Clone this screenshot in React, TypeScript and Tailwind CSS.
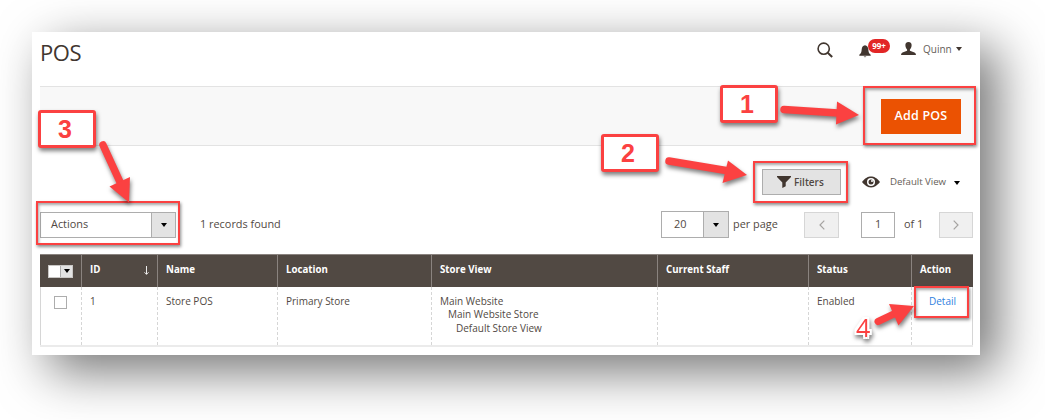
import type { ReactNode } from "react";

function Caret({ className = "" }: { className?: string }) {
  return (
    <svg viewBox="0 0 6 4" className={`h-1 w-1.5 shrink-0 ${className}`} fill="currentColor">
      <path d="M0 0h6L3 4z" />
    </svg>
  );
}

function SearchIcon() {
  return (
    <svg viewBox="0 0 16 16" className="size-4" fill="none" stroke="#41362f" strokeWidth="1.6">
      <circle cx="6.7" cy="6.7" r="5.6" />
      <path d="M10.7 10.7l4.5 4.3" strokeWidth="2" />
    </svg>
  );
}

function BellIcon() {
  return (
    <svg viewBox="0 0 12 13" className="h-[13px] w-3" fill="#41362f">
      <path d="M6 0.3C3.9.7 2.9 2.2 2.7 4.2 2.5 7 2 8.6.3 9.7V10.7H11.7V9.7C10 8.6 9.5 7 9.3 4.2 9.1 2.2 8.1.7 6 .3zM4.6 11.4a1.5 1.3 0 0 0 2.8 0z" />
    </svg>
  );
}

function UserIcon() {
  return (
    <svg viewBox="0 0 15 13" className="h-[13px] w-[15px]" fill="#41362f">
      <path d="M7.5 0C5.3 0 4.2 1.500 4.4 3.500 4.5 5.200 5.2 6.600 6.1 7.400V8.800L1.500 10.400Q0 11 0 13H15Q15 11 13.500 10.400L8.900 8.800V7.400C9.800 6.600 10.500 5.200 10.600 3.500 10.800 1.500 9.700 0 7.500 0z" />
    </svg>
  );
}

function FunnelIcon() {
  return (
    <svg viewBox="0 0 14 12" className="h-3 w-3.5" fill="#41362f">
      <path d="M0 0H14V1L8.700 6.500V10.300L5.300 12V6.500L0 1z" />
    </svg>
  );
}

function EyeIcon() {
  return (
    <svg viewBox="0 0 18 12" className="h-3 w-[18px]">
      <path d="M0 6C3.500 1.800 6 .6 9 .6S14.500 1.800 18 6C14.500 10.200 12 11.400 9 11.400S3.500 10.200 0 6z" fill="#41362f" />
      <circle cx="9" cy="5.900" r="4" fill="#fff" />
      <circle cx="9" cy="5.900" r="2.500" fill="#41362f" />
      <circle cx="10" cy="5" r="1" fill="#fff" />
    </svg>
  );
}

function Chevron({ flip = false }: { flip?: boolean }) {
  return (
    <svg viewBox="0 0 6 10" className={flip ? "h-2.5 w-1.5 -scale-x-100" : "h-2.5 w-1.5"} fill="none" stroke="#a5a3a1" strokeWidth="1.2">
      <path d="M5.300.6L1 5l4.300 4.400" />
    </svg>
  );
}

function Header() {
  return (
    <header className="flex h-[54px] items-start pl-2">
      <h1 className="mt-1 text-[22px] leading-8 tracking-[-0.4px] text-[#41362f]">POS</h1>
      <div className="ml-auto flex h-[34px] items-center pr-[18px]">
        <span className="mt-0.5">
          <SearchIcon />
        </span>
        <div className="ml-[26px] flex items-center">
          <span className="mt-1">
            <BellIcon />
          </span>
          <span className="-mt-1.5 -ml-[3px] flex h-3.5 w-[22px] items-center justify-center rounded-full bg-[#e22626] text-[8px] font-bold text-white">99+</span>
        </div>
        <span className="ml-[11px] -mt-px">
          <UserIcon />
        </span>
        <span className="ml-[7px] w-[27px] text-[10px] whitespace-nowrap text-[#665e58]">Quinn</span>
        <Caret className="ml-[6px] text-[#41362f]" />
      </div>
    </header>
  );
}

function ListToolbar() {
  return (
    <div className="pr-[7px] pl-2 text-[#514943]">
      <div className="mt-[23px] flex h-[26px] items-center justify-end">
        <button className="flex h-[26px] w-[79px] items-center border border-[#adadad] bg-[#e3e3e3] pl-3.5 text-[10px] font-semibold">
          <FunnelIcon />
          <span className="mt-px ml-[3px]">Filters</span>
        </button>
        <span className="ml-[21px]">
          <EyeIcon />
        </span>
        <span className="mt-px ml-2.5 w-14 text-[9.7px] tracking-[-0.05px] whitespace-nowrap text-[#665e58]">Default View</span>
        <Caret className="mt-0.5 mr-[13px] ml-2 text-black" />
      </div>
      <div className="mt-4 flex h-[27px] items-center text-[10.9px]">
        <div className="flex h-[26px] w-[136px] border border-[#adadad]">
          <span className="flex flex-1 items-center pl-2.5">Actions</span>
          <span className="flex w-6 items-center justify-center border-l border-[#adadad] bg-[#e3e3e3] text-black">
            <Caret />
          </span>
        </div>
        <span className="ml-6">1 records found</span>
        <div className="ml-auto flex h-[27px] w-[68px] border border-[#adadad]">
          <span className="flex flex-1 items-center pl-3">20</span>
          <span className="flex w-[25px] items-center justify-center border-l border-[#adadad] bg-[#e3e3e3] text-black">
            <Caret />
          </span>
        </div>
        <span className="ml-1 w-[71px] whitespace-nowrap">per page</span>
        <span className="flex h-[26px] w-[35px] items-center justify-center border border-[#d6d6d6] bg-[#f0f0f0]">
          <Chevron />
        </span>
        <span className="ml-[22px] flex h-[26px] w-[34px] items-center justify-center border border-[#adadad]">1</span>
        <span className="ml-[9px] w-[35px] whitespace-nowrap">of 1</span>
        <span className="flex h-[26px] w-[34px] items-center justify-center border border-[#d6d6d6] bg-[#f0f0f0]">
          <Chevron flip />
        </span>
      </div>
    </div>
  );
}

const columns = "grid grid-cols-[41px_76px_120px_154px_226px_151px_103px_62px]";

function HeadCell({ children }: { children?: ReactNode }) {
  return <div className="flex items-center border-l border-[#8a837f] pb-0.5 pl-2">{children}</div>;
}

function Cell({ children }: { children?: ReactNode }) {
  return <div className="border-l border-dashed border-[#d6d6d6] pt-2 pl-2">{children}</div>;
}

function Records() {
  return (
    <div className="mr-[7px] ml-2 mt-4 text-[10px]">
      <div className={`${columns} h-[33px] border-t border-[#8a837f] bg-[#514943] text-[9.7px] font-bold whitespace-nowrap text-white`}>
        <div className="flex items-center pl-2">
          <div className="flex h-[13px] w-[25px] border border-[#c9c7c5] bg-white">
            <span className="ml-auto flex w-3 items-center justify-center border-l border-[#adadad] bg-[#e3e3e3] text-black">
              <Caret />
            </span>
          </div>
        </div>
        <HeadCell>
          ID
          <svg viewBox="0 0 5 9" className="mr-2 ml-auto h-[9px] w-[5px]" fill="none" stroke="#fff" strokeWidth="0.9">
            <path d="M2.500 0v8.300M.5 6.300l2 2 2-2" />
          </svg>
        </HeadCell>
        <HeadCell>Name</HeadCell>
        <HeadCell>Location</HeadCell>
        <HeadCell>Store View</HeadCell>
        <HeadCell>Current Staff</HeadCell>
        <HeadCell>Status</HeadCell>
        <HeadCell>Action</HeadCell>
      </div>
      <div className={`${columns} h-[60px] border-b-2 border-[#ebebeb] leading-[13.300px] text-[#514943]`}>
        <div className="border-l border-[#d6d6d6] pt-[9px] pl-[13px]">
          <div className="size-[13px] border border-[#adadad]" />
        </div>
        <Cell>1</Cell>
        <Cell>Store POS</Cell>
        <Cell>Primary Store</Cell>
        <Cell>
          <div>Main Website</div>
          <div className="pl-2">Main Website Store</div>
          <div className="pl-4">Default Store View</div>
        </Cell>
        <Cell />
        <Cell>Enabled</Cell>
        <div className="border-r border-l border-dashed border-[#d6d6d6] [border-right-style:solid] pt-2 pl-[17px]">
          <a className="text-[#2f7fe0]">Detail</a>
        </div>
      </div>
    </div>
  );
}

const frame = "absolute border-2 border-[#fb4141] shadow-[1px_2px_3px_rgba(0,0,0,0.45),inset_1px_2px_3px_rgba(0,0,0,0.35)]";
const label =
  "absolute flex h-[38px] w-[58px] items-center justify-center rounded-[3px] border-[3px] border-[#fb4141] bg-white pr-1 font-['Liberation_Sans',sans-serif] text-[25px] leading-none font-bold text-[#fb4141] shadow-[1px_3px_4px_rgba(0,0,0,0.5)]";

function Annotations() {
  return (
    <>
      <div className={`${frame} top-[86px] left-[863px] h-[59px] w-[113px]`} />
      <div className={`${frame} top-[161px] left-[753px] h-[42px] w-[95px]`} />
      <div className={`${frame} top-[201px] left-[36px] h-[44px] w-[144px]`} />
      <div className={`${frame} top-[286px] left-[914px] h-[32px] w-[55px]`} />
      <div className={`${label} top-[85px] left-[720px]`}>1</div>
      <div className={`${label} top-[134px] left-[601px]`}>2</div>
      <div className={`${label} top-[110px] left-[38px]`}>3</div>
      <svg
        viewBox="0 0 1045 420"
        className="pointer-events-none absolute inset-0 h-[420px] w-[1045px] drop-shadow-[1px_3px_2px_rgba(0,0,0,0.5)]"
        fill="#fb4141"
        stroke="#fb4141"
        strokeLinecap="round"
      >
        <path d="M784 109.500L838 113" strokeWidth="7.500" />
        <path d="M837 101.500L859 115L836 124.500z" stroke="none" />
        <path d="M669 161L726 170.500" strokeWidth="7.500" />
        <path d="M728 160.500L747 175L722.500 183z" stroke="none" />
        <path d="M103 145L120 182" strokeWidth="7.500" />
        <path d="M109.500 186.500L130 177L129 202.500z" stroke="none" />
        <path d="M878 321.500L896 313" strokeWidth="7" />
        <path d="M889 304L914 306L898.500 325.500z" stroke="none" />
      </svg>
      <div className="absolute top-[313px] left-[856px] text-[25px] leading-7 text-[#fb4141] drop-shadow-[1px_3px_2px_rgba(0,0,0,0.5)] [text-shadow:2px_0_0_#fff,-2px_0_0_#fff,0_2px_0_#fff,0_-2px_0_#fff,2px_2px_0_#fff,-2px_2px_0_#fff,2px_-2px_0_#fff,-2px_-2px_0_#fff]">4</div>
    </>
  );
}

export default function App() {
  return (
    <div className="relative h-[420px] w-[1045px] overflow-hidden bg-white p-8 font-['Open_Sans',sans-serif]">
      <main className="h-[323px] w-[948px] bg-white shadow-[17px_16px_48px_rgba(0,0,0,0.55)]">
        <Header />
        <div className="ml-2 flex h-[60px] w-[933px] items-center justify-end border-y border-[#e3e3e3] bg-[#f8f8f8] pr-3">
          <button className="h-[35px] w-20 bg-[#eb5202] pt-px text-[12.500px] font-semibold text-white">
            <span className="tracking-[0.200px]">Add POS</span>
          </button>
        </div>
        <ListToolbar />
        <Records />
      </main>
      <Annotations />
    </div>
  );
}
